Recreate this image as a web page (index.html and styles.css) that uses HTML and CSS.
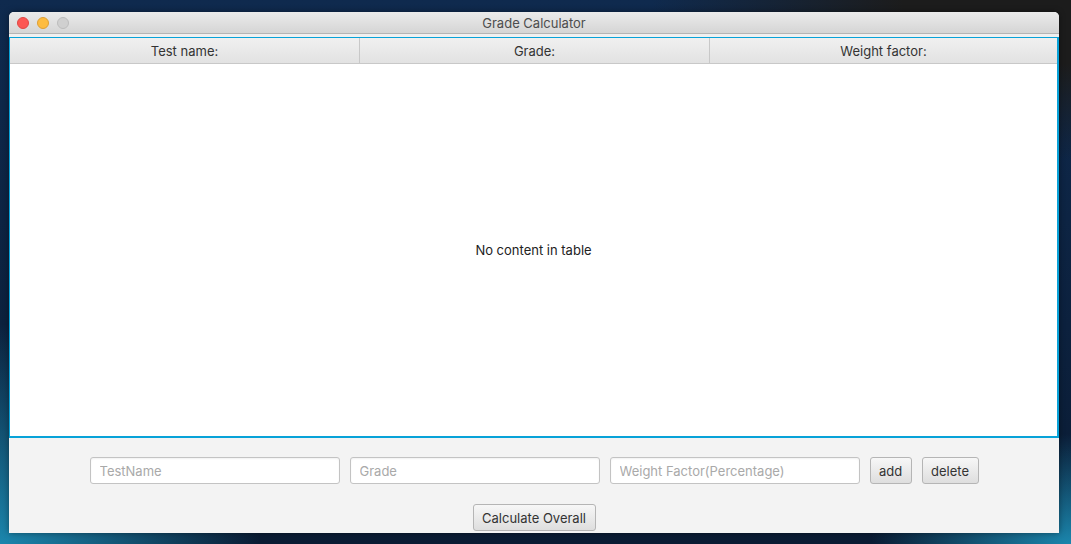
FILE: index.html
```html
<!DOCTYPE html>
<html>
<head>
<meta charset="utf-8">
<link rel="stylesheet" href="styles.css">
</head>
<body>
<div class="window">
  <div class="titlebar">
    <div class="lights">
      <span class="light red"></span>
      <span class="light yellow"></span>
      <span class="light grey"></span>
    </div>
    <div class="title">Grade Calculator</div>
  </div>
  <div class="gap"></div>
  <div class="table">
    <div class="thead">
      <div class="th">Test name:</div>
      <div class="th">Grade:</div>
      <div class="th last">Weight factor:</div>
    </div>
    <div class="tbody">No content in table</div>
  </div>
  <div class="controls">
    <div class="row">
      <input class="field" type="text" placeholder="TestName">
      <input class="field" type="text" placeholder="Grade">
      <input class="field" type="text" placeholder="Weight Factor(Percentage)">
      <button class="btn btn-add">add</button>
      <button class="btn btn-delete">delete</button>
    </div>
    <div class="row">
      <button class="btn btn-calc">Calculate Overall</button>
    </div>
  </div>
</div>
</body>
</html>
```

FILE: styles.css
```css
html, body {
  margin: 0;
  padding: 0;
}
body {
  width: 1071px;
  height: 544px;
  overflow: hidden;
  box-sizing: border-box;
  padding: 12px 12px 0 9px;
  font-family: "Inter", "Liberation Sans", sans-serif;
  font-size: 13px;
  color: #333;
  background:
    radial-gradient(ellipse 260px 220px at 0% 100%, #1b86ad 0%, rgba(27,134,173,0) 100%),
    radial-gradient(ellipse 200px 110px at 100% 100%, #1b86ad 0%, rgba(27,134,173,0) 100%),
    radial-gradient(ellipse 420px 160px at 100% 0%, #1c1c1c 40%, rgba(28,28,28,0) 100%),
    linear-gradient(180deg, #0f2a4e 0%, #0a1b33 100%);
}
.window {
  width: 1050px;
  height: 521px;
  background: #f3f3f3;
  border-radius: 5px 5px 0 0;
  display: flex;
  flex-direction: column;
  overflow: hidden;
  box-shadow: 0 0 6px rgba(0,0,0,0.4);
}
.titlebar {
  height: 21px;
  flex: none;
  display: flex;
  align-items: center;
  position: relative;
  background: linear-gradient(180deg, #ebebeb 0%, #d5d5d5 100%);
  border-bottom: 1px solid #b4b4b4;
}
.lights {
  display: flex;
  gap: 8px;
  padding-left: 8px;
}
.light {
  width: 12px;
  height: 12px;
  border-radius: 50%;
  box-sizing: border-box;
}
.red { background: #fc5753; border: 1px solid #df4744; }
.yellow { background: #fdbc40; border: 1px solid #de9f34; }
.grey { background: #d0d0d0; border: 1px solid #bcbcbc; }
.title {
  position: absolute;
  left: 0;
  right: 0;
  text-align: center;
  color: #4d4d4d;
  font-size: 13px;
}
.gap {
  height: 3px;
  flex: none;
  background: #f0f0f0;
}
.table {
  height: 398px;
  flex: none;
  border: 1px solid #08a2d8;
  border-width: 1px 2px 2px 1px;
  display: flex;
  flex-direction: column;
  background: #fff;
}
.thead {
  height: 26px;
  flex: none;
  display: flex;
  background: linear-gradient(180deg, #f0f0f0 0%, #e2e2e2 100%);
  border-bottom: 1px solid #c8c8c8;
  box-sizing: border-box;
}
.th {
  width: 350px;
  box-sizing: border-box;
  display: flex;
  align-items: center;
  justify-content: center;
  border-right: 1px solid #c8c8c8;
  color: #333;
}
.th.last {
  flex: 1;
  border-right: none;
}
.tbody {
  flex: 1;
  display: flex;
  align-items: center;
  justify-content: center;
  color: #222;
}
.controls {
  flex: 1;
  display: flex;
  flex-direction: column;
  align-items: center;
  padding-top: 19px;
  gap: 20px;
}
.row {
  display: flex;
  gap: 10px;
  align-items: center;
}
.field {
  width: 250px;
  height: 27px;
  box-sizing: border-box;
  border: 1px solid #c3c3c3;
  border-radius: 3px;
  background: #fff;
  box-shadow: inset 0 1px 2px rgba(0,0,0,0.06);
  padding: 0 9px;
  font-family: inherit;
  font-size: 13px;
  color: #333;
  outline: none;
}
.field::placeholder {
  color: #a9a9a9;
}
.btn {
  height: 27px;
  box-sizing: border-box;
  padding: 0;
  border: 1px solid #b5b5b5;
  border-radius: 3px;
  background: linear-gradient(180deg, #f7f7f7 0%, #dedede 100%);
  font-family: inherit;
  font-size: 13px;
  color: #333;
  text-align: center;
}
.btn-add { width: 42px; }
.btn-delete { width: 57px; }
.btn-calc { width: 123px; }
```
